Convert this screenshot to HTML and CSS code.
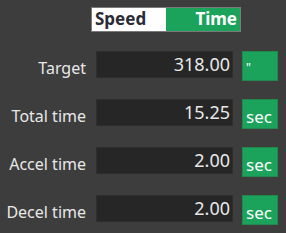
FILE: index.html
```html
<!DOCTYPE html>
<html>
<head>
<meta charset="utf-8">
<link rel="stylesheet" href="styles.css">
</head>
<body>
<div class="panel">
  <div class="toggle">
    <div class="opt opt-off">Speed</div>
    <div class="opt opt-on">Time</div>
  </div>
  <div class="rows">
    <div class="row">
      <div class="label">Target</div>
      <div class="field">318.00</div>
      <div class="unit unit-small">"</div>
    </div>
    <div class="row">
      <div class="label">Total time</div>
      <div class="field">15.25</div>
      <div class="unit">sec</div>
    </div>
    <div class="row">
      <div class="label">Accel time</div>
      <div class="field">2.00</div>
      <div class="unit">sec</div>
    </div>
    <div class="row">
      <div class="label">Decel time</div>
      <div class="field">2.00</div>
      <div class="unit">sec</div>
    </div>
  </div>
</div>
</body>
</html>
```
FILE: styles.css
```css
html, body {
  margin: 0;
  padding: 0;
  background: #3d3d3d;
}
body {
  width: 286px;
  height: 233px;
  overflow: hidden;
  font-family: "Noto Sans", "Open Sans", sans-serif;
  color: #e8e8e8;
}
.panel {
  padding-top: 7px;
}
.toggle {
  margin-left: 91px;
  width: 150px;
  height: 25px;
  box-sizing: border-box;
  border: 1px solid #7a7a7a;
  display: flex;
}
.opt {
  flex: 1;
  font-weight: bold;
  font-size: 17px;
  line-height: 22px;
}
.opt-off {
  background: #ffffff;
  color: #2b2b35;
  padding-left: 3px;
}
.opt-on {
  background: #1ba35b;
  color: #ffffff;
  text-align: right;
  padding-right: 3px;
}
.rows {
  margin-top: 19px;
  display: flex;
  flex-direction: column;
  gap: 21px;
}
.row {
  display: flex;
  align-items: flex-start;
  height: 27px;
}
.label {
  width: 86px;
  text-align: right;
  font-size: 16px;
  line-height: 20px;
  padding-top: 7px;
  box-sizing: border-box;
}
.field {
  margin-left: 10px;
  width: 137px;
  height: 27px;
  box-sizing: border-box;
  background: #262626;
  border: 1px solid #2e2e2e;
  text-align: right;
  padding-right: 2px;
  font-size: 18px;
  line-height: 24px;
}
.unit {
  margin-left: 9px;
  width: 36px;
  height: 30px;
  box-sizing: border-box;
  background: #1ba35b;
  border: 1px solid #22884f;
  color: #ffffff;
  font-size: 17px;
  line-height: 20px;
  padding-top: 7px;
  padding-left: 3px;
}
.unit-small {
  font-size: 12px;
  padding-top: 6px;
}
```
